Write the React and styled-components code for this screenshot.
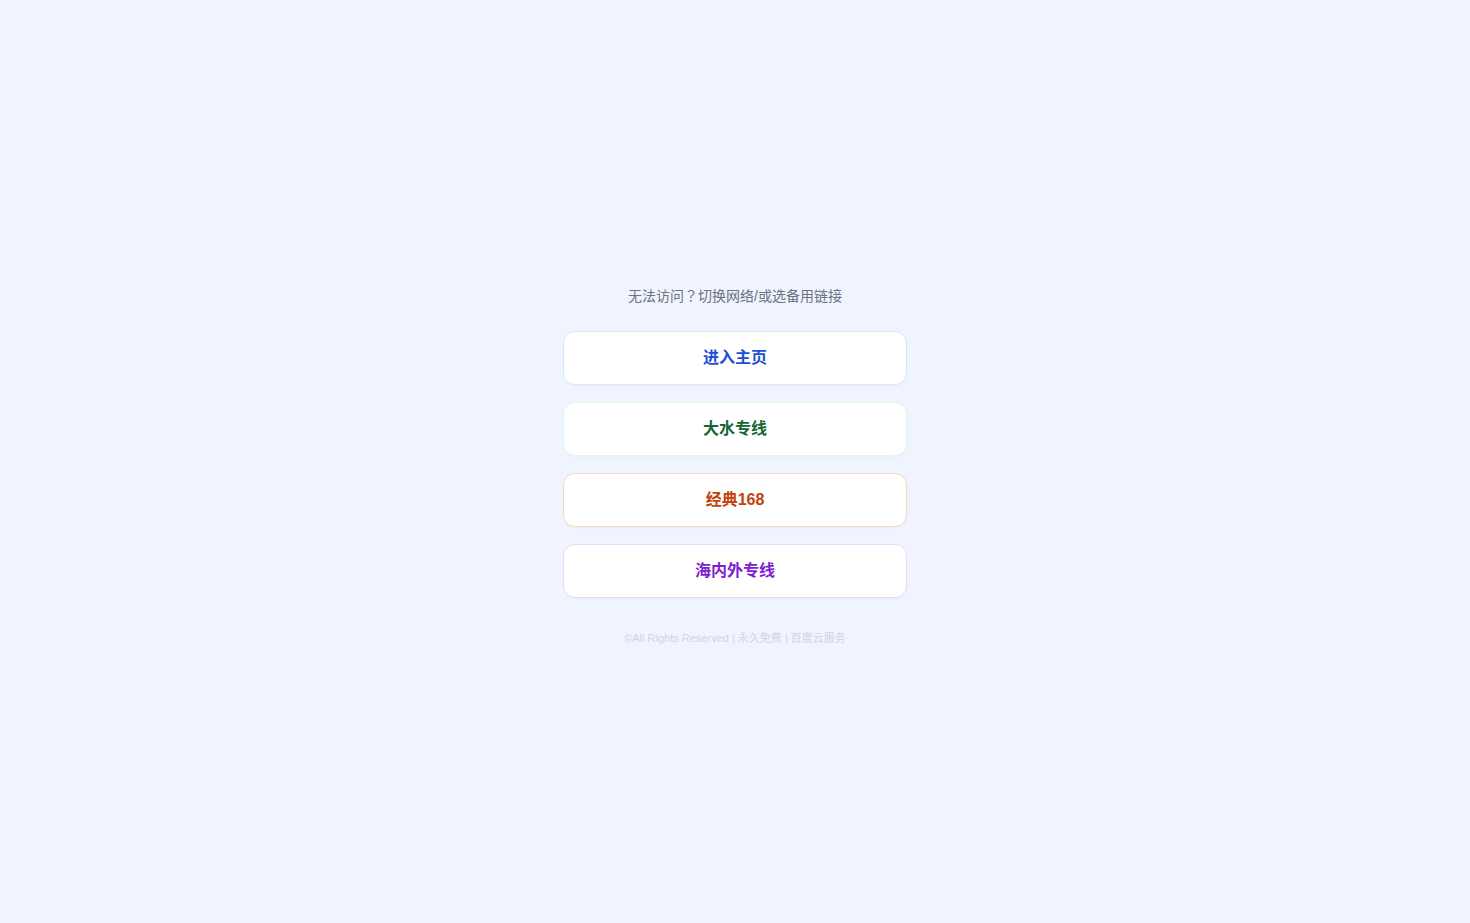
import styled, { createGlobalStyle } from "styled-components";

const GlobalStyle = createGlobalStyle`
  html, body {
    margin: 0;
    padding: 0;
    background: #eff4ff;
  }
  body {
    font-family: "Liberation Sans", Arial, "Noto Sans CJK SC", sans-serif;
  }
`;

const links = [
  { label: "进入主页", color: "#1d4ed8", border: "#dbe6fb" },
  { label: "大水专线", color: "#166534", border: "#e3f6ec" },
  { label: "经典168", color: "#c2410c", border: "#f8d9b4" },
  { label: "海内外专线", color: "#7e22ce", border: "#e6dafa" },
];

function App() {
  return (
    <>
      <GlobalStyle />
      <Page>
        <Panel>
          <Hint>无法访问？切换网络/或选备用链接</Hint>
          <LinkList>
            {links.map((l) => (
              <LinkButton key={l.label} href="#" $color={l.color} $border={l.border}>
                {l.label}
              </LinkButton>
            ))}
          </LinkList>
          <Footer>©All Rights Reserved | 永久免费 | 百度云服务</Footer>
        </Panel>
      </Page>
    </>
  );
}
export default App;

const Page = styled.div`
  min-height: 100vh;
  display: flex;
  align-items: center;
  justify-content: center;
  box-sizing: border-box;
  padding-top: 8px;
`;

const Panel = styled.div`
  display: flex;
  flex-direction: column;
  align-items: center;
  width: 344px;
`;

const Hint = styled.div`
  font-family: "Liberation Sans", Arial, "Noto Sans CJK TC", sans-serif;
  font-size: 14px;
  line-height: 20px;
  color: #6b7280;
  margin-bottom: 25px;
`;

const LinkList = styled.div`
  display: flex;
  flex-direction: column;
  gap: 17px;
  width: 100%;
`;

const LinkButton = styled.a`
  display: flex;
  align-items: center;
  justify-content: center;
  height: 54px;
  box-sizing: border-box;
  padding-bottom: 4px;
  background: #ffffff;
  border: 1px solid ${(p) => p.$border};
  border-radius: 12px;
  color: ${(p) => p.$color};
  font-size: 16px;
  font-weight: 700;
  text-decoration: none;
  box-shadow: 0 1px 2px rgba(30, 60, 120, 0.03);
`;

const Footer = styled.div`
  margin-top: 32px;
  font-size: 11px;
  line-height: 16px;
  color: #cfd5e0;
`;
